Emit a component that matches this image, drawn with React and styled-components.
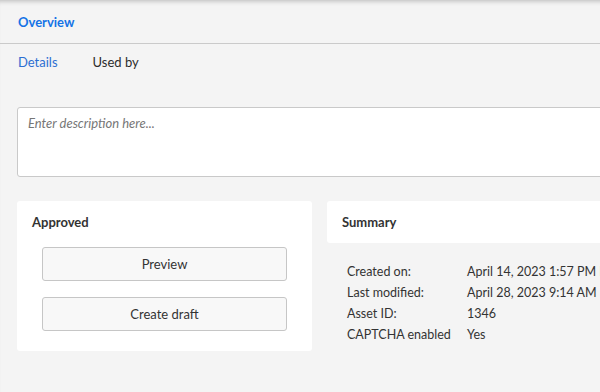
import styled, { createGlobalStyle } from "styled-components";

const Global = createGlobalStyle`
  html, body {
    margin: 0;
    padding: 0;
    background: #f4f4f4;
    overflow: hidden;
  }
  body {
    font-family: Lato, "Noto Sans", sans-serif;
    color: #2c2c2c;
  }
`;

const Page = styled.div`
  width: 760px;
  height: 392px;
  background: #f4f4f4;
  box-shadow: inset 0 5px 5px -4px rgba(0, 0, 0, 0.25);
`;

const Header = styled.div`
  height: 43px;
  display: flex;
  align-items: center;
  padding-left: 18px;
  border-bottom: 1px solid #cacaca;
`;

const Title = styled.div`
  font-size: 13px;
  font-weight: 700;
  color: #1473e6;
`;

const Tabs = styled.div`
  display: flex;
  gap: 35px;
  padding: 7px 0 0 18px;
  height: 22px;
  align-items: center;
`;

const Tab = styled.div`
  font-size: 13px;
  color: ${(p) => (p.active ? "#2d6fd2" : "#2c2c2c")};
`;

const Body = styled.div`
  padding: 34px 0 0 17px;
`;

const Description = styled.textarea`
  display: block;
  box-sizing: border-box;
  width: 640px;
  height: 70px;
  margin: 0;
  padding: 7px 10px;
  border: 1px solid #c9c9c9;
  border-radius: 3px;
  background: #fff;
  resize: none;
  font-family: Lato, "Noto Sans", sans-serif;
  font-size: 13px;
  &::placeholder {
    color: #767676;
    font-style: italic;
  }
`;

const Columns = styled.div`
  display: grid;
  grid-template-columns: 295px 300px;
  column-gap: 15px;
  margin-top: 24px;
  align-items: start;
`;

const Card = styled.div`
  background: #fff;
  border-radius: 3px;
  padding: 13px 15px ${(p) => p.bottom || 13}px;
`;

const CardTitle = styled.div`
  font-size: 13px;
  font-weight: 700;
  color: #333;
  line-height: 16px;
`;

const Actions = styled.div`
  display: flex;
  flex-direction: column;
  gap: 16px;
  padding: 0 10px;
  margin-top: 17px;
`;

const Button = styled.button`
  height: 34px;
  border: 1px solid #c6c6c6;
  border-radius: 3px;
  background: #f8f8f8;
  font-family: Lato, "Noto Sans", sans-serif;
  font-size: 13px;
  color: #333;
`;

const Table = styled.div`
  display: grid;
  grid-template-columns: 120px auto;
  grid-auto-rows: 21px;
  align-items: center;
  padding: 18px 0 0 20px;
  font-size: 12.5px;
  color: #333;
  white-space: nowrap;
`;

const rows = [
  ["Created on:", "April 14, 2023 1:57 PM PDT"],
  ["Last modified:", "April 28, 2023 9:14 AM PDT"],
  ["Asset ID:", "1346"],
  ["CAPTCHA enabled", "Yes"],
];

export default function App() {
  return (
    <Page>
      <Global />
      <Header>
        <Title>Overview</Title>
      </Header>
      <Tabs>
        <Tab active>Details</Tab>
        <Tab>Used by</Tab>
      </Tabs>
      <Body>
        <Description placeholder="Enter description here..." />
        <Columns>
          <Card bottom={20}>
            <CardTitle>Approved</CardTitle>
            <Actions>
              <Button>Preview</Button>
              <Button>Create draft</Button>
            </Actions>
          </Card>
          <div>
            <Card>
              <CardTitle>Summary</CardTitle>
            </Card>
            <Table>
              {rows.map(([k, v]) => [
                <span key={k}>{k}</span>,
                <span key={k + "v"}>{v}</span>,
              ])}
            </Table>
          </div>
        </Columns>
      </Body>
    </Page>
  );
}
